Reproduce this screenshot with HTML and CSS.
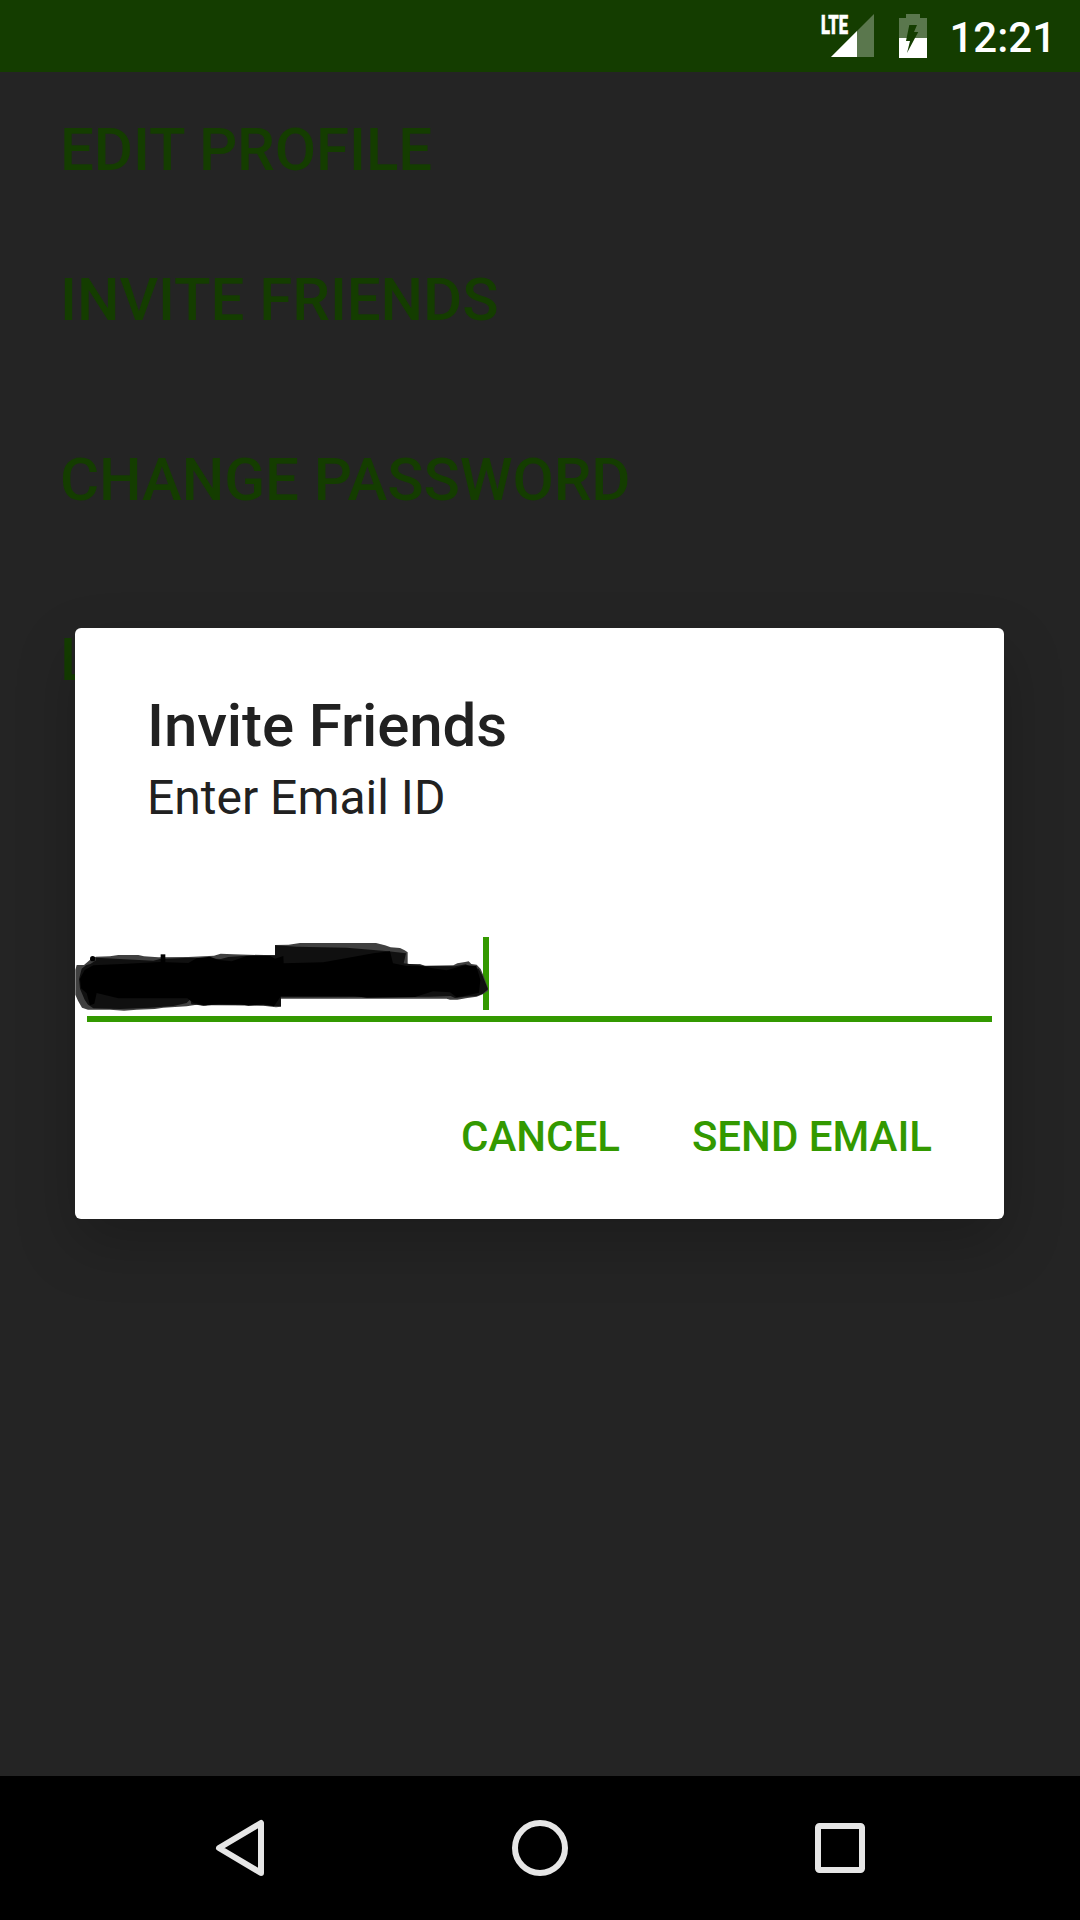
FILE: index.html
```html
<!DOCTYPE html>
<html lang="en">

<head>
    <meta charset="UTF-8">
    <meta name="viewport" content="width=device-width, initial-scale=1.0">
    <title>Invite Friends</title>
    <link rel="stylesheet" href="styles.css">
</head>

<body>
    <div class="screen">
        <header class="status-bar">
            <svg class="signal" width="54" height="44" viewBox="0 0 54 44">
                <path d="M11 43L54 0V43Z" fill="#fff" fill-opacity=".3" />
                <path d="M11 43L37 17V43Z" fill="#fff" />
                <text class="lte" x="1" y="19.5" textLength="27" lengthAdjust="spacingAndGlyphs">LTE</text>
            </svg>
            <svg class="battery" width="28" height="44" viewBox="0 0 28 44">
                <path d="M7 0H21V4H28V24H16L19.300 18H15L18 11H10.300L7.600 24H0V4H7Z" fill="#fff" fill-opacity=".3" />
                <path d="M0 24H7.600L7 27H11L8 39L16 24H28V44H0Z" fill="#fff" />
            </svg>
            <span class="clock">12:21</span>
        </header>

        <ul class="menu">
            <li>EDIT PROFILE</li>
            <li>INVITE FRIENDS</li>
            <li>CHANGE PASSWORD</li>
            <li>LOGOUT</li>
        </ul>

        <footer class="nav-bar">
            <svg width="58" height="60" viewBox="0 0 58 60">
                <path d="M7 30L49 5V55Z" />
            </svg>
            <svg width="60" height="60" viewBox="0 0 60 60">
                <circle cx="30" cy="30" r="25" />
            </svg>
            <svg width="60" height="60" viewBox="0 0 60 60">
                <rect x="8" y="8" width="44" height="44" rx="1.5" />
            </svg>
        </footer>
    </div>

    <div class="panel">
        <h3>Invite Friends</h3>
        <p>Enter Email ID</p>
        <div class="field">
            <span class="cursor"></span>
            <svg class="scribble" width="450" height="120" viewBox="0 0 1350 360">
                <path class="soft" d="M50 135H72L92 118L108 110L150 109L175 105H235L252 109L295 112L385 111L462 107L482 101L520 103L645 106V75L686 74L720 69H948L975 76L992 82L1020 84L1034 91L1043 97V132H1080L1094 137L1180 136L1192 130L1215 126L1226 124L1234 132L1250 134L1262 147L1270 166L1284 204V212L1270 222L1250 230L1222 234L1192 239H1170L1160 236H663V260L648 262L610 257L455 256L430 258L410 254L380 259L310 263L284 267L230 269L192 272L150 269H84L66 263L54 242L46 224V150Z" />
                <path class="mid" d="M65 146L78 136L91 132L108 121V113L280 122L300 117L390 113L483 117L505 111L580 106H645V76L710 80L860 83L985 94L1038 100L1031 130L1098 138L1185 139L1217 133L1240 143L1256 146L1268 168L1284 208L1268 221L1250 228L1215 230L1185 234L1172 228L1110 230L663 232V259L610 256L455 254L430 256L394 253L391 238L380 249L340 258L270 263L180 267L100 265L84 254L74 239L60 206L57 178Z" />
                <path class="core" d="M74 150L100 136L185 132L300 126L385 129L410 115L450 110L476 120L515 124L560 108H630L645 116L670 108L671 130L790 127L890 109L940 100L990 94L999 130L1040 138L1090 139L1118 145L1160 151L1215 136L1249 138L1261 180L1257 218L1215 227L1190 232L1170 217L1119 214L1065 231L920 233L884 228H663L642 259L610 253L565 257L540 252H478L435 256L400 248L382 235H175L110 219L103 251L90 256L80 220L63 205L60 176Z" />
                <circle class="core" cx="98" cy="116" r="8" />
                <rect class="core" x="302" y="103" width="14" height="30" />
            </svg>
        </div>
        <div class="actions">
            <a class="btn btn-cancel" href="#">CANCEL</a>
            <a class="btn btn-send" href="#">SEND EMAIL</a>
        </div>
    </div>
</body>

</html>
```
FILE: styles.css
```css
* {
    box-sizing: border-box;
}

body {
    margin: 0;
    font-family: Roboto, "Liberation Sans", sans-serif;
    background-color: #242424;
}

.screen {
    display: flex;
    flex-direction: column;
    width: 1080px;
    height: 1920px;
    overflow: hidden;
}

.status-bar {
    display: flex;
    justify-content: flex-end;
    align-items: flex-start;
    height: 72px;
    padding: 14px 24px 0 0;
    background-color: #143d00;
    color: #fff;
}

.signal {
    margin-right: 25px;
    overflow: visible;
}

.lte {
    font-size: 26px;
    font-weight: 900;
    fill: #fff;
    stroke: #fff;
    stroke-width: 0.6;
}

.battery {
    margin-right: 22px;
}

.clock {
    font-size: 42px;
    font-weight: 500;
    line-height: 48px;
}

.menu {
    flex: 1;
    margin: 0;
    padding: 43px 60px 0;
    list-style: none;
    font-size: 60px;
    font-weight: 500;
    line-height: 70px;
    letter-spacing: -0.08px;
    color: #143d00;
}

.menu li {
    margin-bottom: 110px;
}

.menu li:first-child {
    margin-bottom: 80px;
}

.nav-bar {
    display: flex;
    justify-content: space-between;
    align-items: center;
    height: 144px;
    padding: 0 210px 0 212px;
    background-color: #000;
}

.nav-bar svg {
    fill: none;
    stroke: #e6e6e6;
    stroke-width: 6;
    stroke-linejoin: round;
}

.panel {
    position: absolute;
    top: 628px;
    left: 75px;
    width: 929px;
    height: 591px;
    padding-top: 63px;
    border-radius: 6px;
    background-color: #fff;
    box-shadow: 0 24px 60px 0 rgba(0, 0, 0, 0.22);
    color: #212121;
}

.panel h3 {
    margin: 0 72px;
    font-size: 60px;
    font-weight: 500;
    line-height: 70px;
    letter-spacing: -0.1px;
}

.panel p {
    margin: 9px 72px 0;
    font-size: 48px;
    line-height: 56px;
}

/* text input with underline */
.field {
    position: relative;
    height: 85px;
    margin: 111px 12px 0;
    border-bottom: 6px solid #390;
}

.cursor {
    display: block;
    width: 6px;
    height: 73px;
    margin-left: 396px;
    background-color: #390;
}

.scribble {
    position: absolute;
    top: -17px;
    left: -27px;
}

.soft {
    fill: #404040;
}

.mid {
    fill: #101010;
}

.core {
    fill: #000;
}

.actions {
    display: flex;
    justify-content: flex-end;
    gap: 72px;
    padding: 90px 72px 0 0;
}

.btn {
    font-size: 42px;
    font-weight: 500;
    line-height: 50px;
    text-decoration: none;
    color: #390;
}
```
